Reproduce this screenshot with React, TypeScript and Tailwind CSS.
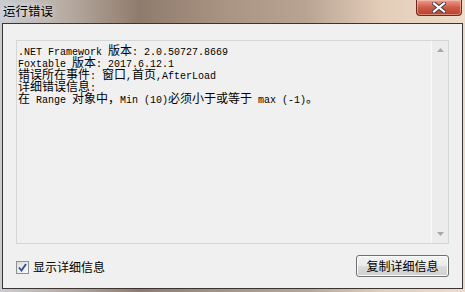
import React from 'react'

const lines = [
  '.NET Framework 版本: 2.0.50727.8669',
  'Foxtable 版本: 2017.6.12.1',
  '错误所在事件: 窗口,首页,AfterLoad',
  '详细错误信息:',
  '在 Range 对象中，Min (10)必须小于或等于 max (-1)。',
]

// SimSun-like look: half-width latin 6px, CJK 12px
function MixedLine({ text }: { text: string }) {
  const runs = text.match(/[\u3000-\u9fff\uff00-\uffef]+|[^\u3000-\u9fff\uff00-\uffef]+/g) ?? []
  return (
    <div className="h-[12px] leading-[12px] whitespace-pre">
      {runs.map((run, i) =>
        /[\u3000-\u9fff\uff00-\uffef]/.test(run) ? (
          <span key={i} className="font-['Noto_Sans_CJK_SC',sans-serif] text-[12px] leading-[12px]">
            {run}
          </span>
        ) : (
          <span key={i} className="font-['Liberation_Mono','Noto_Sans_CJK_SC',monospace] text-[10px] leading-[12px] text-black">
            {run}
          </span>
        ),
      )}
    </div>
  )
}

function CloseButton() {
  return (
    <div className="flex h-[16px] w-[46px] items-center justify-center rounded-b-[4px] border border-t-0 border-[#6b2a20] bg-gradient-to-b from-[#e9a08f] via-[#cf5a45] to-[#b9402c] shadow-[inset_0_0_0_1px_rgba(255,210,200,0.5)]">
      <svg width="14" height="11" viewBox="0 0 14 11">
        <path d="M2 1.5 L12 9.5 M12 1.5 L2 9.5" stroke="#3b3b3b" strokeWidth="4" strokeLinecap="square" />
        <path d="M2 1.5 L12 9.5 M12 1.5 L2 9.5" stroke="#ffffff" strokeWidth="2.2" strokeLinecap="square" />
      </svg>
    </div>
  )
}

export default function App() {
  return (
    <div className="flex h-[292px] w-[465px] flex-col overflow-hidden bg-[linear-gradient(90deg,#c9cdd2_0%,#b7aca3_14%,#8f7b6c_30%,#a99383_48%,#b9a493_66%,#e3cdb9_82%,#ecdcca_100%)] font-['Noto_Sans_CJK_SC',sans-serif]">
      <div className="flex h-[23px] shrink-0 items-start justify-between pr-[3px]">
        <div className="pl-[3px] pt-[3px] text-[12.5px] leading-[16px] text-black [text-shadow:0_0_6px_rgba(255,255,255,0.9)]">
          运行错误
        </div>
        <CloseButton />
      </div>
      <div className="mx-[2px] mb-[3px] flex flex-1 flex-col border border-[#3a3533] bg-[#f0f0f0] px-[13px] pt-[16px]">
        <div className="flex h-[204px] border border-[#d6d6d6] bg-[#f0f0f0]">
          <div className="flex-1 pl-[1px] pt-[1px] text-black">
            {lines.map((l) => (
              <MixedLine key={l} text={l} />
            ))}
          </div>
          <div className="flex w-[17px] flex-col items-center justify-between border-l border-[#fafafa] bg-[#ececec] py-[7px]">
            <svg width="7" height="4" viewBox="0 0 7 4">
              <path d="M0 4 L3.5 0 L7 4 Z" fill="#a8a8a8" />
            </svg>
            <svg width="7" height="4" viewBox="0 0 7 4">
              <path d="M0 0 L7 0 L3.5 4 Z" fill="#a8a8a8" />
            </svg>
          </div>
        </div>
        <div className="mt-[11px] flex items-start justify-between">
          <label className="mt-[5px] flex items-center gap-[4px] text-[12px] leading-[14px] text-black">
            <span className="flex h-[13px] w-[13px] items-center justify-center border border-[#8e8f8f] bg-gradient-to-br from-[#dcdcdc] to-[#fbfbfb]">
              <svg width="9" height="9" viewBox="0 0 9 9">
                <path d="M1 4.5 L3.5 7.5 L8 1" fill="none" stroke="#2a4e9c" strokeWidth="1.8" />
              </svg>
            </span>
            显示详细信息
          </label>
          <button className="flex h-[22px] w-[93px] items-center justify-center rounded-[3px] border border-[#707070] bg-[linear-gradient(180deg,#f2f2f2_0%,#ebebeb_50%,#dddddd_51%,#cfcfcf_100%)] text-[12px] leading-[14px] text-black shadow-[inset_0_0_0_1px_#fcfcfc]">
            复制详细信息
          </button>
        </div>
      </div>
    </div>
  )
}
